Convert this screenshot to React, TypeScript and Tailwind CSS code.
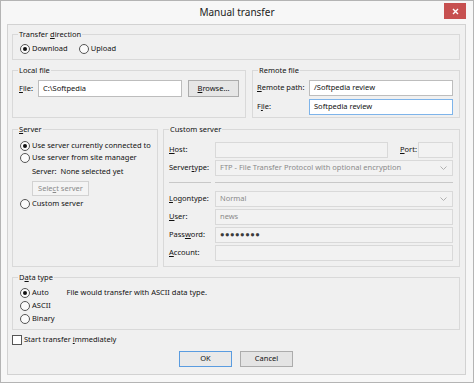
import type { ReactNode } from "react";

const font = "font-['Noto_Sans',sans-serif]";

function Radio({ checked, children }: { checked?: boolean; children: ReactNode }) {
  return (
    <div className="flex h-[12px] items-center">
      <span className="flex h-[10px] w-[10px] shrink-0 items-center justify-center rounded-full border border-[#555] bg-[#fbfbfb]">
        {checked && <span className="h-[4px] w-[4px] rounded-full bg-[#111]" />}
      </span>
      <span className="ml-[2px] whitespace-nowrap">{children}</span>
    </div>
  );
}

function Group({
  title,
  className,
  children,
}: {
  title: ReactNode;
  className: string;
  children: ReactNode;
}) {
  return (
    <fieldset className={`border border-[#d9d9d9] ${className}`}>
      <legend className="ml-[5px] px-[1px] leading-[11px]">{title}</legend>
      {children}
    </fieldset>
  );
}

function TextBox({
  value,
  className = "",
  disabled,
  focused,
}: {
  value?: string;
  className?: string;
  disabled?: boolean;
  focused?: boolean;
}) {
  const look = disabled
    ? "border-[#d9d9d9] bg-[#f2f2f2] text-[#8a8a8a]"
    : focused
      ? "border-[#7eb4ea] bg-white text-[#111]"
      : "border-[#bdbdbd] bg-white text-[#111]";
  return (
    <div className={`flex h-[16px] items-center border px-[4px] whitespace-nowrap ${look} ${className}`}>
      {value}
    </div>
  );
}

function Combo({ value }: { value: string }) {
  return (
    <div className="flex h-[16px] flex-1 items-center justify-between border border-[#d9d9d9] bg-[#f2f2f2] pl-[4px] pr-[5px] text-[#8a8a8a]">
      <span className="whitespace-nowrap">{value}</span>
      <svg width="7" height="4" viewBox="0 0 7 4" className="shrink-0">
        <path d="M0.5 0.5 L3.5 3.5 L6.5 0.5" fill="none" stroke="#b0b0b0" strokeWidth="1" />
      </svg>
    </div>
  );
}

function Field({ label, children }: { label: ReactNode; children: ReactNode }) {
  return (
    <div className="flex h-[16px] items-center">
      <span className="w-[46px] shrink-0">{label}</span>
      {children}
    </div>
  );
}

export default function App() {
  return (
    <div
      className={`${font} flex h-[383px] w-[474px] flex-col border border-[#b4b4b4] bg-[#f7f7f7] text-[7.5px] text-[#111]`}
    >
      <div className="relative flex h-[23px] shrink-0 items-center justify-center">
        <span className="text-[10px] text-[#222]">Manual transfer</span>
        <div className="absolute right-[7px] top-[2px] flex h-[16px] w-[22px] items-center justify-center bg-[#c75050]">
          <svg width="7" height="7" viewBox="0 0 7 7">
            <path d="M1 1 L6 6 M6 1 L1 6" stroke="#fff" strokeWidth="1.4" />
          </svg>
        </div>
      </div>

      <div className="mb-[7px] ml-[6px] mr-[7px] flex flex-1 flex-col border border-[#d2d2d2] bg-[#f0f0f0] pl-[4px] pr-[5px]">
        <Group
          title={
            <>
              Transfer <u>d</u>irection
            </>
          }
          className="mt-[4px] h-[31px]"
        >
          <div className="flex gap-[11px] pl-[7px] pt-[3px]">
            <Radio checked>Download</Radio>
            <Radio>Upload</Radio>
          </div>
        </Group>

        <div className="mt-[5px] flex h-[53px] gap-[6px]">
          <Group title="Local file" className="h-full w-[234px] shrink-0">
            <div className="flex items-center pl-[6px] pr-[6px] pt-[4px]">
              <span className="w-[19px] shrink-0">
                <u>F</u>ile:
              </span>
              <TextBox value="C:\Softpedia" className="h-[17px] w-[144px]" />
              <div className="ml-[6px] flex h-[17px] flex-1 items-center justify-center border border-[#acacac] bg-[#e6e6e6]">
                <span>
                  <u>B</u>rowse...
                </span>
              </div>
            </div>
          </Group>
          <Group title="Remote file" className="h-full flex-1">
            <div className="flex flex-col gap-[3px] pl-[4px] pr-[6px] pt-[4px]">
              <div className="flex items-center">
                <span className="w-[52px] shrink-0">
                  <u>R</u>emote path:
                </span>
                <TextBox value="/Softpedia review" className="flex-1" />
              </div>
              <div className="flex items-center">
                <span className="w-[52px] shrink-0">
                  F<u>i</u>le:
                </span>
                <TextBox value="Softpedia review" className="flex-1" focused />
              </div>
            </div>
          </Group>
        </div>

        <div className="mt-[6px] flex h-[143px] gap-[5px]">
          <Group
            title={
              <>
                <u>S</u>erver
              </>
            }
            className="h-full w-[146px] shrink-0"
          >
            <div className="flex flex-col pl-[7px] pt-[5px]">
              <Radio checked>Use server currently connected to</Radio>
              <Radio>Use server from site manager</Radio>
              <div className="mt-[2px] flex h-[12px] items-center pl-[12px]">Server:&nbsp; None selected yet</div>
              <div className="ml-[12px] mt-[3px] flex h-[15px] w-[57px] items-center justify-center border border-[#d2d2d2] bg-[#f4f4f4] text-[#8a8a8a]">
                <span>
                  Sele<u>c</u>t server
                </span>
              </div>
              <div className="mt-[2px]">
                <Radio>Custom server</Radio>
              </div>
            </div>
          </Group>

          <Group title="Custom server" className="h-full flex-1">
            <div className="flex flex-col pl-[5px] pr-[6px] pt-[7px]">
              <Field
                label={
                  <>
                    <u>H</u>ost:
                  </>
                }
              >
                <TextBox disabled className="w-[173px]" />
                <span className="w-[30px] shrink-0 pl-[12px]">
                  <u>P</u>ort:
                </span>
                <TextBox disabled className="flex-1" />
              </Field>
              <div className="mt-[2px]">
                <Field
                  label={
                    <>
                      Server<u>t</u>ype:
                    </>
                  }
                >
                  <Combo value="FTP - File Transfer Protocol with optional encryption" />
                </Field>
              </div>
              <div className="mb-[8px] mt-[6px] flex gap-[4px]">
                <div className="h-px w-[42px] bg-[#c8c8c8]" />
                <div className="h-px flex-1 bg-[#c8c8c8]" />
              </div>
              <div className="flex flex-col gap-[2px]">
                <Field
                  label={
                    <>
                      <u>L</u>ogontype:
                    </>
                  }
                >
                  <Combo value="Normal" />
                </Field>
                <Field
                  label={
                    <>
                      <u>U</u>ser:
                    </>
                  }
                >
                  <TextBox disabled value="news" className="flex-1" />
                </Field>
                <Field
                  label={
                    <>
                      Pass<u>w</u>ord:
                    </>
                  }
                >
                  <TextBox
                    disabled
                    value="●●●●●●●●"
                    className="flex-1 !text-[#3a3a3a] tracking-[0.5px]"
                  />
                </Field>
                <Field
                  label={
                    <>
                      <u>A</u>ccount:
                    </>
                  }
                >
                  <TextBox disabled className="flex-1" />
                </Field>
              </div>
            </div>
          </Group>
        </div>

        <Group
          title={
            <>
              D<u>a</u>ta type
            </>
          }
          className="mt-[5px] h-[58px]"
        >
          <div className="flex pl-[7px] pt-[4px]">
            <div className="flex flex-col gap-[1px]">
              <Radio checked>Auto</Radio>
              <Radio>ASCII</Radio>
              <Radio>Binary</Radio>
            </div>
            <div className="ml-[12px] flex h-[12px] items-center">File would transfer with ASCII data type.</div>
          </div>
        </Group>

        <div className="mt-[4px] flex h-[12px] items-center">
          <span className="h-[10px] w-[10px] shrink-0 border border-[#555] bg-white" />
          <span className="ml-[2px]">
            Start transfer <u>i</u>mmediately
          </span>
        </div>

        <div className="mt-[5px] flex justify-center gap-[8px]">
          <div className="flex h-[16px] w-[53px] items-center justify-center border border-[#5a9ce0] bg-[#e9e9e9]">
            OK
          </div>
          <div className="flex h-[16px] w-[53px] items-center justify-center border border-[#acacac] bg-[#e4e4e4]">
            Cancel
          </div>
        </div>
      </div>
    </div>
  );
}
